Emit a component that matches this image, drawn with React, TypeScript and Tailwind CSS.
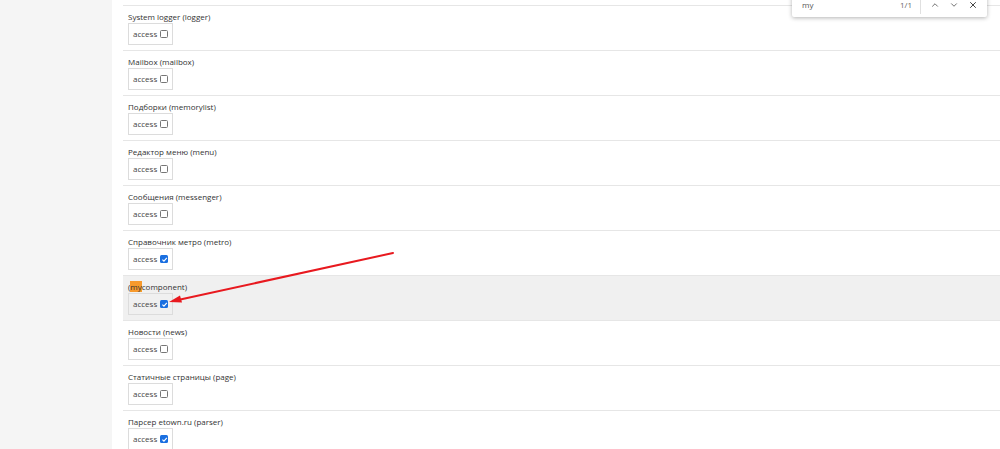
import { ChevronUp, ChevronDown, X } from "lucide-react";

const MODULES: { title: string; checked: boolean; highlight?: boolean }[] = [
  { title: "", checked: false },
  { title: "System logger (logger)", checked: false },
  { title: "Mailbox (mailbox)", checked: false },
  { title: "Подборки (memorylist)", checked: false },
  { title: "Редактор меню (menu)", checked: false },
  { title: "Сообщения (messenger)", checked: false },
  { title: "Справочник метро (metro)", checked: true },
  { title: "(mycomponent)", checked: true, highlight: true },
  { title: "Новости (news)", checked: false },
  { title: "Статичные страницы (page)", checked: false },
  { title: "Парсер etown.ru (parser)", checked: true },
];

function Check({ checked }: { checked: boolean }) {
  if (checked) {
    return (
      <span className="w-[8px] h-[8px] rounded-[1.5px] bg-[#1a6fe0] flex items-center justify-center shrink-0">
        <svg width="7" height="7" viewBox="0 0 10 10">
          <path d="M2 5.2 L4.2 7.4 L8.3 2.6" fill="none" stroke="#fff" strokeWidth="1.6" />
        </svg>
      </span>
    );
  }
  return <span className="w-[8px] h-[8px] rounded-[1.5px] border border-[#767676] bg-white shrink-0" />;
}

function Title({ text, highlight }: { text: string; highlight?: boolean }) {
  if (!highlight) return <>{text}</>;
  return (
    <>
      (<span className="bg-[#f79a2c]">my</span>
      {text.slice(3)}
    </>
  );
}

export default function App() {
  return (
    <div className="relative w-[1000px] h-[449px] overflow-hidden flex bg-white text-[#333]" style={{ fontFamily: '"Open Sans", "Liberation Sans", sans-serif' }}>
      <div className="w-[112px] shrink-0 bg-[#f5f5f5]" />
      <div className="flex-1 pl-[11px]">
        <div className="-mt-[40px]">
          {MODULES.map((m, i) => (
            <div key={i}
              className={`h-[45px] border-t border-[#e6e6e6] pl-[5px] pt-[5px] ${m.highlight ? "bg-[#f0f0f0] border-b" : ""}`}
              style={m.highlight ? { height: 46, marginBottom: -1 } : undefined}>
              <div className="h-[12px] leading-[12px] text-[8px] whitespace-nowrap">
                <Title text={m.title} highlight={m.highlight} />
              </div>
              <div className="w-[45px] h-[22px] border border-[#dcdcdc] flex items-center pl-[4px] gap-[3px]">
                {m.title && (
                  <>
                    <span className="text-[8px] leading-[10px] text-[#444]">access</span>
                    <Check checked={m.checked} />
                  </>
                )}
              </div>
            </div>
          ))}
        </div>
      </div>

      {/* find bar */}
      <div className="absolute left-[792px] -top-[8px] w-[195px] h-[25px] bg-white shadow-[0_1px_4px_rgba(0,0,0,0.3)] rounded-b-[2px] flex items-center text-[8px] text-[#555]">
        <span className="ml-[10px] w-[98px]">my</span>
        <span className="w-[20px] text-[#666]">1/1</span>
        <span className="w-px h-[18px] bg-[#e0e0e0]" />
        <ChevronUp className="ml-[9px]" size={10} strokeWidth={2} color="#555" />
        <ChevronDown className="ml-[9px]" size={10} strokeWidth={2} color="#555" />
        <X className="ml-[9px]" size={10} strokeWidth={2.4} color="#444" />
      </div>

      {/* annotation arrow */}
      <svg className="absolute left-0 top-0 pointer-events-none" width="1000" height="449">
        <line x1="393" y1="253" x2="178" y2="300" stroke="#e8191f" strokeWidth="2" strokeLinecap="round" />
        <polygon points="169,302 180,295.5 182,302.5" fill="#e8191f" />
      </svg>
    </div>
  );
}
